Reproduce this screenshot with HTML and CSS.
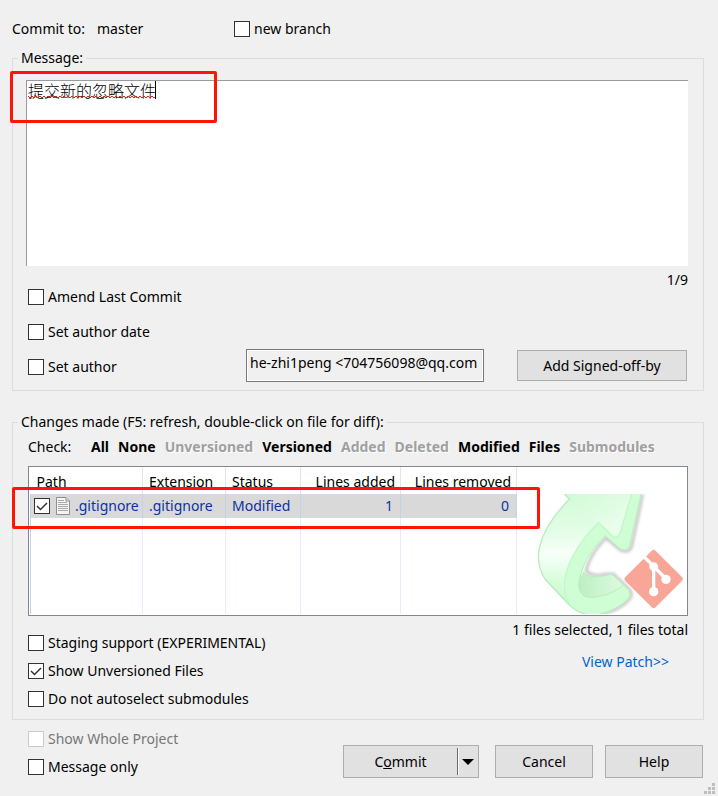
FILE: index.html
```
<!DOCTYPE html>
<html>
<head>
	<title>Commit</title>
	<meta charset="utf-8"/>
	<link rel="stylesheet" href="styles.css">
</head>
<body>
	<form class="dialog">
		<div class="target">
			<span class="target-label">Commit to:</span>
			<span class="branch">master</span>
			<label class="check"><input type="checkbox">new branch</label>
		</div>

		<fieldset class="group">
			<legend>Message:</legend>
			<div class="message">
				<textarea class="message-text" aria-label="Message" spellcheck="false">提交新的忽略文件</textarea>
				<svg class="spelling" width="128" height="4">
					<defs>
						<pattern id="wave" width="4" height="4" patternUnits="userSpaceOnUse">
							<path d="M0 1L2 3L4 1" fill="none" stroke="#e02020"/>
						</pattern>
					</defs>
					<rect width="128" height="4" fill="url(#wave)"/>
				</svg>
				<span class="caret"></span>
				<span class="mark mark-message"></span>
			</div>
			<div class="options">
				<div class="option-list">
					<label class="check"><input type="checkbox">Amend Last Commit</label>
					<label class="check"><input type="checkbox">Set author date</label>
					<label class="check"><input type="checkbox">Set author</label>
				</div>
				<div class="option-side">
					<div class="count">1/9</div>
					<div class="author-row">
						<input class="author" type="text" aria-label="Author" value="he-zhi1peng &lt;704756098@qq.com" readonly>
						<button type="button" class="btn sign">Add Signed-off-by</button>
					</div>
				</div>
			</div>
		</fieldset>

		<fieldset class="group changes">
			<legend>Changes made (F5: refresh, double-click on file for diff):</legend>
			<div class="filter">
				<span class="filter-label">Check:</span>
				<button type="button">All</button>
				<button type="button">None</button>
				<button type="button" disabled>Unversioned</button>
				<button type="button">Versioned</button>
				<button type="button" disabled>Added</button>
				<button type="button" disabled>Deleted</button>
				<button type="button">Modified</button>
				<button type="button">Files</button>
				<button type="button" disabled>Submodules</button>
			</div>
			<div class="list">
				<svg class="watermark" width="153" height="120" viewBox="12 12 459 360">
					<defs>
						<linearGradient id="side" x1="0" y1="0" x2="0" y2="1">
							<stop offset="0" stop-color="#d3fbd8"/>
							<stop offset="0.3" stop-color="#e2fde6"/>
							<stop offset="0.5" stop-color="#f8fff9"/>
							<stop offset="0.75" stop-color="#d4fdd8"/>
							<stop offset="1" stop-color="#c4f8c8"/>
						</linearGradient>
						<linearGradient id="head" x1="0" y1="0" x2="1" y2="1">
							<stop offset="0" stop-color="#d0fad6"/>
							<stop offset="1" stop-color="#f0fff2"/>
						</linearGradient>
						<linearGradient id="floor" x1="0" y1="0" x2="1" y2="0">
							<stop offset="0" stop-color="#bdeec2"/>
							<stop offset="1" stop-color="#dcfbdf"/>
						</linearGradient>
						<filter id="soft" x="-20%" y="-20%" width="140%" height="140%"><feGaussianBlur stdDeviation="4"/></filter>
					</defs>
					<path d="M338 12L304 172Q294 190 272 180L228 143Q178 194 168 242Q184 262 226 253L250 252L300 300Q308 316 298 328Q266 362 214 372" fill="none" stroke="#bdbdbd" stroke-width="8" filter="url(#soft)"/>
					<path d="M102 12H333L298 170Q290 186 270 176L226 137Q174 190 160 246Q178 268 225 257Q240 250 250 256L298 302Q303 316 295 326Q260 360 210 372H165Q140 365 120 347L45 267Q27 240 25 200Q28 120 118 28Z" fill="url(#side)"/>
					<path d="M206 98L250 140Q262 146 270 130L305 12H333L298 170Q290 186 270 176L226 137Q160 200 146 275Q144 318 175 322Q225 325 278 288L298 302Q303 316 295 326Q260 360 210 372H165Q140 365 124 350Q100 320 104 270Q120 180 206 98Z" fill="#d0fed4"/>
					<path d="M102 12L118 28L150 70L206 98L250 140Q262 146 270 130L305 12Z" fill="url(#head)"/>
					<path d="M160 246Q145 270 146 288Q150 318 175 322Q225 325 278 288L250 256Q240 250 225 257Q178 268 160 246Z" fill="url(#floor)"/>
					<path d="M104 12L118 28Q28 120 25 200Q27 240 45 267L120 347Q140 365 165 372" fill="none" stroke="#b9ebc0" stroke-width="4"/>
					<path d="M333 12L298 170Q290 186 270 176L226 137Q160 200 146 275Q144 318 175 322Q225 325 278 288M160 246Q178 268 225 257Q240 250 250 256L298 302Q303 316 295 326Q260 360 210 372" fill="none" stroke="#b5efbb" stroke-width="3"/>
					<path d="M124 350Q100 320 104 270Q120 180 206 98L250 140Q262 146 270 130L305 12" fill="none" stroke="#bff9c5" stroke-width="4"/>
					<rect x="307" y="203" width="128" height="128" rx="8" transform="rotate(45 371 267)" fill="#f8a697"/>
					<path d="M340 198L371 229V305M371 229L408 267" fill="none" stroke="#fff" stroke-width="10"/>
					<g fill="#fff">
						<circle cx="371" cy="230" r="13"/>
						<circle cx="371" cy="305" r="14"/>
						<circle cx="408" cy="268" r="14"/>
					</g>
				</svg>
				<table class="files">
					<thead>
						<tr>
							<th class="col-path">Path</th>
							<th class="col-ext">Extension</th>
							<th class="col-status">Status</th>
							<th class="col-added num">Lines added</th>
							<th class="col-removed num">Lines removed</th>
						</tr>
					</thead>
					<tbody>
						<tr class="selected">
							<td>
								<label class="file">
									<input type="checkbox" checked>
									<svg width="16" height="18" viewBox="0 0 16 18">
										<path d="M1.500 .5H11L14.500 4V17.500H1.500Z" fill="#f4f4f4" stroke="#8f8f8f"/>
										<path d="M11 .5V4H14.500" fill="#ddd" stroke="#8f8f8f"/>
										<path d="M3 3.500H9M3 5.500H12M3 7.500H13M3 9.500H13M3 11.500H13M3 13.500H13" stroke="#a8a8a8"/>
									</svg>
									.gitignore
								</label>
							</td>
							<td>.gitignore</td>
							<td>Modified</td>
							<td class="num">1</td>
							<td class="num">0</td>
						</tr>
						<tr class="blank">
							<td></td>
							<td></td>
							<td></td>
							<td></td>
							<td></td>
						</tr>
					</tbody>
				</table>
				<span class="mark mark-file"></span>
			</div>
			<div class="below">
				<div class="below-list">
					<label class="check"><input type="checkbox">Staging support (EXPERIMENTAL)</label>
					<label class="check"><input type="checkbox" checked>Show Unversioned Files</label>
					<label class="check"><input type="checkbox">Do not autoselect submodules</label>
				</div>
				<div class="summary">
					<div>1 files selected, 1 files total</div>
					<a class="patch" href="#">View Patch&gt;&gt;</a>
				</div>
			</div>
		</fieldset>

		<div class="footer">
			<div class="below-list">
				<label class="check disabled"><input type="checkbox" disabled>Show Whole Project</label>
				<label class="check"><input type="checkbox">Message only</label>
			</div>
			<div class="actions">
				<div class="split">
					<button type="button" class="split-main"><span>C<u>o</u>mmit</span></button>
					<button type="button" class="split-arrow" aria-label="More commit actions">
						<svg width="12" height="8" viewBox="0 0 12 8"><path d="M0 1H12L6 7Z" fill="#000"/></svg>
					</button>
				</div>
				<button type="button" class="btn">Cancel</button>
				<button type="button" class="btn">Help</button>
			</div>
		</div>
		<svg class="grip" width="12" height="12" viewBox="0 0 12 12">
			<path d="M8 0h3v3H8zM4 4h3v3H4zM8 4h3v3H8zM0 8h3v3H0zM4 8h3v3H4zM8 8h3v3H8z" fill="#bfbfbf"/>
		</svg>
	</form>
</body>
</html>
```
FILE: styles.css
```
*{
	box-sizing: border-box;
}
body{
	margin: 0;
	background-color: #f0f0f0;
	color: #000;
	font-family: "Noto Sans","Noto Sans CJK SC",sans-serif;
	font-size: 14px;
	line-height: 20px;
}
button,input,textarea{
	font: inherit;
	color: inherit;
}
.dialog{
	position: relative;
	min-height: 100vh;
	padding: 19px 14px 0 12px;
}
.target{
	display: flex;
	align-items: center;
	height: 20px;
}
.target-label{
	width: 85px;
}
.branch{
	width: 137px;
}
.check{
	display: flex;
	align-items: center;
	gap: 4px;
}
input[type=checkbox]{
	appearance: none;
	flex: none;
	width: 16px;
	height: 16px;
	margin: 0;
	border: 1px solid #333;
	background-color: #fff;
}
input[type=checkbox]:checked{
	background-image: url("data:image/svg+xml,%3Csvg xmlns='http://www.w3.org/2000/svg' viewBox='0 0 14 14'%3E%3Cpath d='M2 7L5.500 10.500L12 4' fill='none' stroke='%23333' stroke-width='1.500'/%3E%3C/svg%3E");
}
input[type=checkbox]:disabled{
	border-color: #ccc;
}
.disabled{
	color: #777;
}

/* group boxes */
.group{
	min-width: 0;
	margin: 9px 0 0;
	padding: 12px 15px 8px 13px;
	border: 1px solid #dcdcdc;
}
.group legend{
	margin-left: -8px;
	padding: 0 3px;
	height: 20px;
}
.message{
	position: relative;
}
.message-text{
	display: block;
	width: 100%;
	height: 186px;
	padding: 0 1px;
	border: 0 solid #9a9a9a;
	border-width: 1px 0 0 1px;
	background-color: #fff;
	font-family: "Noto Sans CJK SC",sans-serif;
	font-size: 16px;
	font-weight: 300;
	line-height: 18px;
	resize: none;
	outline: none;
}
.spelling{
	position: absolute;
	left: 2px;
	top: 15px;
}
.caret{
	position: absolute;
	left: 129px;
	top: 1px;
	width: 1px;
	height: 18px;
	background-color: #000;
}
.mark{
	position: absolute;
	border: 3px solid #ff1408;
	border-radius: 2px;
	pointer-events: none;
}
.mark-message{
	left: -16px;
	top: -9px;
	width: 207px;
	height: 52px;
}
.options{
	display: flex;
	justify-content: space-between;
	padding-left: 2px;
}
.option-list{
	display: flex;
	flex-direction: column;
	gap: 15px;
	padding: 21px 0 5px;
}
.option-side{
	display: flex;
	flex-direction: column;
	justify-content: space-between;
	padding-top: 4px;
}
.count{
	text-align: right;
}
.author-row{
	display: flex;
	align-items: center;
	gap: 33px;
	margin-right: 1px;
}
.author{
	width: 238px;
	height: 33px;
	padding: 0 2px 6px 3px;
	border: 1px solid #7a7a7a;
	box-shadow: inset 0 0 0 1px #fff;
	background-color: #f0f0f0;
}
.btn{
	width: 98px;
	height: 33px;
	padding: 0;
	border: 1px solid #adadad;
	background-color: #e1e1e1;
}
.sign{
	width: 170px;
	height: 31px;
}

/* changed files */
.changes{
	margin-top: 21px;
	padding: 5px 15px 10px;
}
.changes legend{
	margin-left: -10px;
}
.filter{
	display: flex;
	gap: 9px;
	height: 20px;
}
.filter-label{
	width: 54px;
}
.filter button{
	padding: 0;
	border: 0;
	background: none;
	font-weight: bold;
}
.filter button:disabled{
	color: #a0a0a0;
	text-shadow: 1px 1px #fff;
}
.list{
	position: relative;
	height: 150px;
	margin-top: 9px;
	padding: 0 1px 1px;
	border: 1px solid #828790;
	background-color: #fff;
}
.watermark{
	position: absolute;
	right: 0;
	bottom: 1px;
}
.files{
	position: relative;
	height: 100%;
	border-collapse: collapse;
	table-layout: fixed;
	width: 486px;
}
.files th,
.files td{
	padding: 0 7px 0 6px;
	border-right: 1px solid #e4eefb;
	text-align: left;
	font-weight: normal;
	white-space: nowrap;
}
.files th{
	height: 27px;
	padding: 3px 5px 0 6px;
	border-color: #e5e5e5;
}
.files .num{
	text-align: right;
}
.col-path{
	width: 112px;
}
.col-ext{
	width: 83px;
}
.col-status{
	width: 75px;
}
.col-added{
	width: 100px;
}
.col-removed{
	width: 116px;
}
.selected td{
	height: 24px;
	background-color: #d9d9d9;
	border-color: #c3d3e3;
	color: #0a32a0;
}
.selected td:first-child{
	padding: 0 0 0 3px;
}
.files td:first-child{
	border-left: 1px solid #c3d3e8;
}
.blank td{
	padding: 0;
}
.file{
	display: flex;
	align-items: center;
	gap: 5px;
}
.file svg{
	margin-right: -1px;
}
.mark-file{
	left: -17px;
	top: 20px;
	width: 528px;
	height: 42px;
}
.below{
	display: flex;
	justify-content: space-between;
}
.below-list{
	display: flex;
	flex-direction: column;
	gap: 8px;
}
.below .below-list{
	padding-top: 17px;
}
.summary{
	padding-top: 4px;
	text-align: right;
}
.patch{
	display: block;
	margin: 12px 19px 0 0;
	color: #0066cc;
	text-decoration: none;
}

/* bottom row */
.footer{
	display: flex;
	justify-content: space-between;
	padding: 9px 1px 0 16px;
}
.actions{
	display: flex;
	gap: 12px;
	padding-top: 16px;
}
.split{
	display: flex;
	align-items: center;
	width: 136px;
	height: 33px;
	margin-right: 4px;
	border: 1px solid #adadad;
	background-color: #e1e1e1;
}
.split button{
	padding: 0;
	border: 0;
	background: none;
}
.split-main{
	flex: 1;
}
.split .split-arrow{
	display: flex;
	align-items: center;
	justify-content: center;
	width: 21px;
	height: 27px;
	border-left: 1px solid #696969;
	box-shadow: inset 1px 0 #fff;
}
.grip{
	position: absolute;
	right: 2px;
	bottom: 1px;
}
```
